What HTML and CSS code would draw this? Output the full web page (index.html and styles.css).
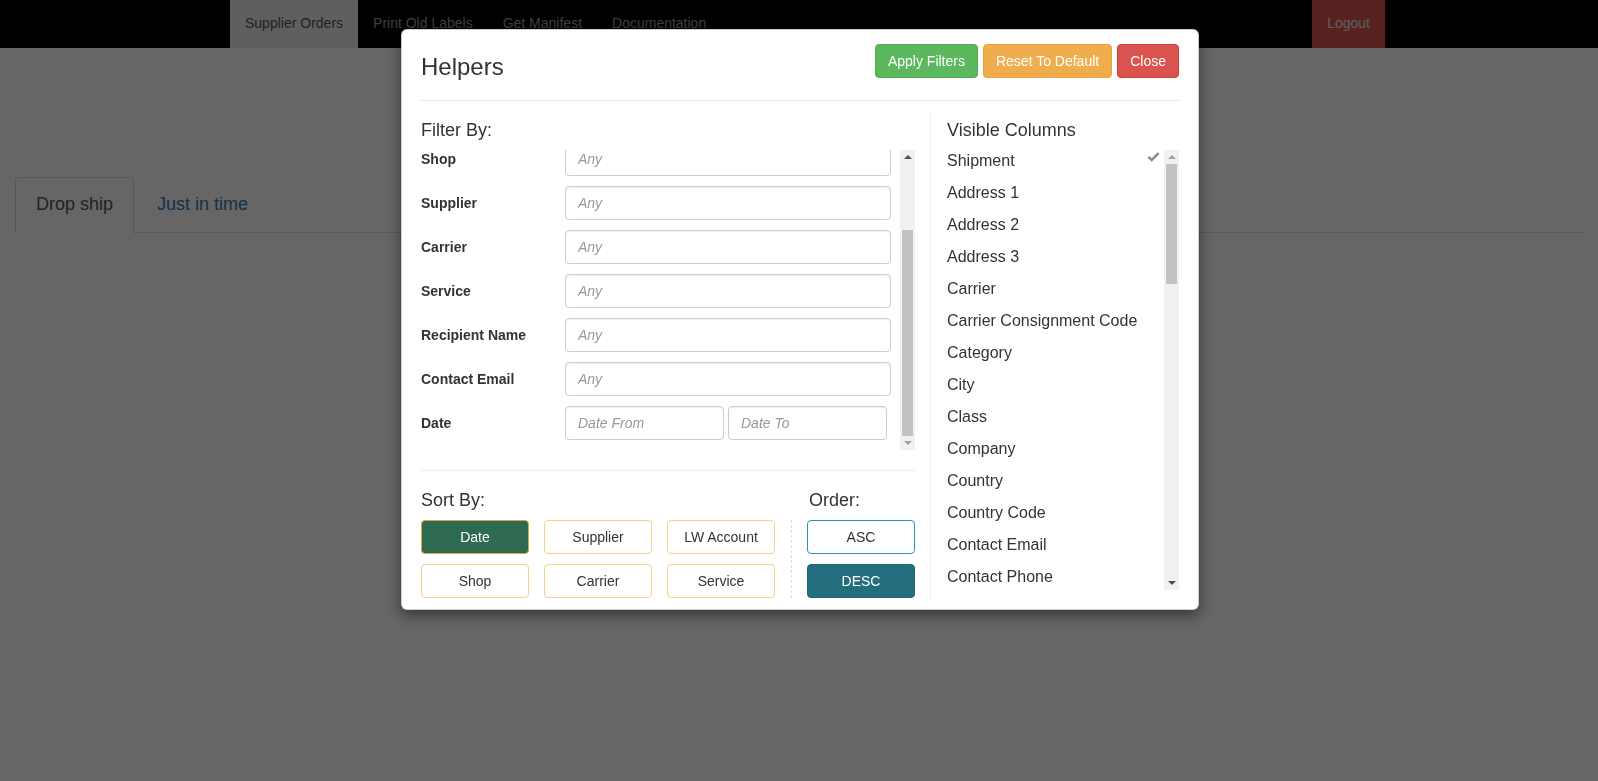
FILE: index.html
```html
<!DOCTYPE html>
<html>
<head>
<meta charset="utf-8">
<title>Supplier Orders</title>
<link rel="stylesheet" href="styles.css">
</head>
<body>
<nav class="navbar">
  <div class="nav-container">
    <ul class="nav-left">
      <li class="nav-item active">Supplier Orders</li>
      <li class="nav-item">Print Old Labels</li>
      <li class="nav-item">Get Manifest</li>
      <li class="nav-item">Documentation</li>
    </ul>
    <ul class="nav-right">
      <li class="nav-item logout">Logout</li>
    </ul>
  </div>
</nav>

<main class="page">
  <ul class="tabs">
    <li class="tab active">Drop ship</li>
    <li class="tab link">Just in time</li>
  </ul>
</main>

<div class="backdrop"></div>

<div class="modal">
  <div class="modal-header">
    <h4 class="modal-title">Helpers</h4>
    <div class="header-buttons">
      <button class="btn btn-success">Apply Filters</button>
      <button class="btn btn-warning">Reset To Default</button>
      <button class="btn btn-danger">Close</button>
    </div>
  </div>
  <div class="modal-body">
    <section class="left-col">
      <h5 class="section-title">Filter By:</h5>
      <div class="scroll-box filter-box">
        <div class="scroll-content">
          <div class="filter-rows">
            <div class="filter-row"><label>Shop</label><input class="form-control" placeholder="Any"></div>
            <div class="filter-row"><label>Supplier</label><input class="form-control" placeholder="Any"></div>
            <div class="filter-row"><label>Carrier</label><input class="form-control" placeholder="Any"></div>
            <div class="filter-row"><label>Service</label><input class="form-control" placeholder="Any"></div>
            <div class="filter-row"><label>Recipient Name</label><input class="form-control" placeholder="Any"></div>
            <div class="filter-row"><label>Contact Email</label><input class="form-control" placeholder="Any"></div>
            <div class="filter-row"><label>Date</label>
              <div class="date-pair">
                <input class="form-control date" placeholder="Date From">
                <input class="form-control date" placeholder="Date To">
              </div>
            </div>
          </div>
        </div>
        <div class="scrollbar">
          <div class="arrow up dark"></div>
          <div class="track"><div class="thumb filter-thumb"></div></div>
          <div class="arrow down light"></div>
        </div>
      </div>
      <hr class="divider">
      <div class="sort-area">
        <div class="sort-col">
          <h5 class="section-title">Sort By:</h5>
          <div class="sort-grid">
            <button class="sbtn selected">Date</button>
            <button class="sbtn">Supplier</button>
            <button class="sbtn">LW Account</button>
            <button class="sbtn">Shop</button>
            <button class="sbtn">Carrier</button>
            <button class="sbtn">Service</button>
          </div>
        </div>
        <div class="order-col">
          <h5 class="section-title order-title">Order:</h5>
          <div class="order-buttons">
            <button class="obtn">ASC</button>
            <button class="obtn selected">DESC</button>
          </div>
        </div>
      </div>
    </section>
    <section class="right-col">
      <h5 class="section-title">Visible Columns</h5>
      <div class="scroll-box columns-box">
        <ul class="scroll-content column-list">
          <li class="col-item">Shipment<svg class="check" viewBox="0 0 14 11" width="13" height="10"><path d="M0.5 6.2 L2.4 4.3 L5 6.8 L11.6 0.3 L13.5 2.2 L5 10.6 Z" fill="#8a8a8a"/></svg></li>
          <li class="col-item">Address 1</li>
          <li class="col-item">Address 2</li>
          <li class="col-item">Address 3</li>
          <li class="col-item">Carrier</li>
          <li class="col-item">Carrier Consignment Code</li>
          <li class="col-item">Category</li>
          <li class="col-item">City</li>
          <li class="col-item">Class</li>
          <li class="col-item">Company</li>
          <li class="col-item">Country</li>
          <li class="col-item">Country Code</li>
          <li class="col-item">Contact Email</li>
          <li class="col-item">Contact Phone</li>
        </ul>
        <div class="scrollbar">
          <div class="arrow up light"></div>
          <div class="track"><div class="thumb columns-thumb"></div></div>
          <div class="arrow down dark"></div>
        </div>
      </div>
    </section>
  </div>
</div>
</body>
</html>
```
FILE: styles.css
```css
* { box-sizing: border-box; }

html, body {
  margin: 0;
  padding: 0;
}

body {
  font-family: "Liberation Sans", Arial, sans-serif;
  font-size: 14px;
  line-height: 1.42857;
  color: #333;
  background: #fff;
  height: 781px;
  overflow: hidden;
}

ul { list-style: none; margin: 0; padding: 0; }
h4, h5 { margin: 0; font-weight: 400; }

/* Navbar */
.navbar {
  height: 48px;
  background: #000;
}
.nav-container {
  width: 1170px;
  margin: 0 0 0 215px;
  padding: 0 0 0 15px;
  display: flex;
  justify-content: space-between;
}
.nav-left, .nav-right { display: flex; }
.nav-item {
  padding: 13px 15px 15px;
  line-height: 20px;
  color: #9d9d9d;
}
.nav-item.active { background: #eee; color: #555; }
.nav-item.logout { background: #d9534f; color: #eee; }

/* Page */
.page {
  padding: 129px 15px 0;
}
.tabs {
  display: flex;
  border-bottom: 1px solid #ddd;
}
.tab {
  font-size: 18px;
  line-height: 24px;
  padding: 14px 20px 16px;
  margin-right: 2px;
  margin-bottom: -1px;
  border: 1px solid transparent;
  border-radius: 4px 4px 0 0;
}
.tab.active {
  background: #fff;
  border-color: #ddd #ddd transparent;
  color: #555;
}
.tab.link { color: #337ab7; }

/* Backdrop */
.backdrop {
  position: fixed;
  inset: 0;
  background: rgba(0, 0, 0, 0.6);
}

/* Modal */
.modal {
  position: fixed;
  top: 29px;
  left: 401px;
  width: 798px;
  background: #fff;
  border: 1px solid rgba(0, 0, 0, 0.2);
  border-radius: 6px;
  box-shadow: 0 5px 15px rgba(0, 0, 0, 0.5);
  padding: 14px 19px 11px;
}
.modal-header {
  display: flex;
  justify-content: space-between;
  align-items: flex-start;
  height: 34px;
}
.modal-title {
  font-size: 24px;
  line-height: 26px;
  margin-top: 10px;
  color: #333;
}
.header-buttons {
  display: flex;
  gap: 5px;
}
.btn {
  font-family: inherit;
  font-size: 14px;
  line-height: 20px;
  padding: 6px 12px;
  border: 1px solid transparent;
  border-radius: 4px;
  color: #fff;
  cursor: pointer;
}
.btn-success { background: #5cb85c; border-color: #4cae4c; }
.btn-warning { background: #f0ad4e; border-color: #eea236; }
.btn-danger { background: #d9534f; border-color: #d43f3a; }

.modal-body {
  margin-top: 22px;
  border-top: 1px solid #e5e5e5;
  display: flex;
  gap: 15px;
}

.section-title {
  font-size: 18px;
  line-height: 20px;
  color: #333;
  margin-bottom: 10px;
}

/* Left column */
.left-col {
  width: 494px;
  padding-top: 19px;
}
.scroll-box {
  display: flex;
  overflow: hidden;
}
.filter-box { height: 300px; }
.scroll-content { flex: 1; overflow: hidden; }
.filter-rows { margin-top: -8px; }
.filter-row {
  display: flex;
  align-items: center;
  height: 34px;
  margin-bottom: 10px;
}
.filter-row label {
  width: 144px;
  font-weight: 700;
  color: #333;
  padding-top: 1px;
}
.form-control {
  width: 326px;
  height: 34px;
  padding: 6px 12px;
  font-family: inherit;
  font-size: 14px;
  color: #555;
  border: 1px solid #ccc;
  border-radius: 4px;
  box-shadow: inset 0 1px 1px rgba(0, 0, 0, 0.075);
  background: #fff;
  outline: none;
}
.form-control::placeholder { color: #999; font-style: italic; }
.date-pair { display: flex; gap: 4px; }
.form-control.date { width: 159px; }

/* Scrollbar */
.scrollbar {
  width: 15px;
  background: #f1f1f1;
  display: flex;
  flex-direction: column;
}
.arrow {
  height: 14px;
  display: flex;
  align-items: center;
  justify-content: center;
}
.arrow::before {
  content: "";
  width: 0;
  height: 0;
  border-left: 4px solid transparent;
  border-right: 4px solid transparent;
}
.arrow.up::before { border-bottom: 4px solid currentColor; }
.arrow.down::before { border-top: 4px solid currentColor; }
.arrow.dark { color: #505050; }
.arrow.light { color: #a3a3a3; }
.track { flex: 1; }
.thumb {
  margin: 0 2px;
  background: #c1c1c1;
}
.filter-thumb { margin-top: 66px; height: 206px; }
.columns-thumb { height: 120px; }

.divider {
  margin: 20px 0 0;
  border: 0;
  border-top: 1px solid #eee;
}

/* Sort */
.sort-area {
  display: flex;
  padding-top: 19px;
}
.sort-col { width: 354px; }
.sort-grid {
  display: grid;
  grid-template-columns: repeat(3, 108px);
  justify-content: space-between;
  row-gap: 10px;
}
.sbtn, .obtn {
  font-family: inherit;
  font-size: 14px;
  line-height: 20px;
  height: 34px;
  padding: 6px 12px;
  background: #fff;
  color: #333;
  border-radius: 4px;
  cursor: pointer;
}
.sbtn { border: 1px solid #f7d08a; }
.sbtn.selected {
  background: #2e6a50;
  border-color: #d4a93f;
  color: #fff;
}
.order-col {
  margin-left: 16px;
  width: 124px;
}
.order-title { padding-left: 18px; }
.order-buttons {
  border-left: 1px dashed #ddd;
  padding-left: 15px;
  display: flex;
  flex-direction: column;
  gap: 10px;
}
.obtn {
  width: 108px;
  border: 1px solid #2b8fc2;
}
.obtn.selected {
  background: #226e7d;
  border-color: #1f6876;
  color: #fff;
}

/* Right column */
.right-col {
  flex: 1;
  margin-top: 10px;
  padding: 9px 0 8px 16px;
  border-left: 1px solid #eee;
}
.columns-box { height: 440px; }
.col-item {
  font-size: 16px;
  line-height: 22px;
  padding-bottom: 10px;
  color: #333;
  display: flex;
  justify-content: space-between;
  align-items: flex-start;
  padding-right: 4px;
}
.check { margin-top: 2px; }
```
